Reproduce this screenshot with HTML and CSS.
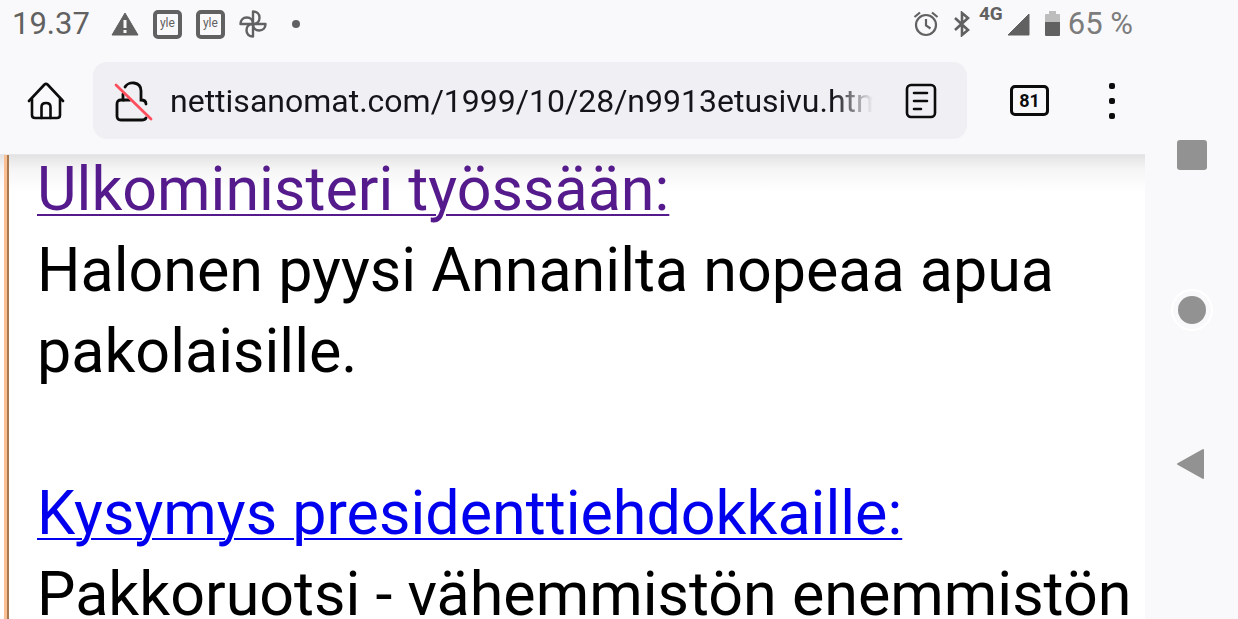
FILE: index.html
```
<!DOCTYPE html>
<html lang="fi">

<head>
    <meta charset="utf-8">
    <meta name="viewport" content="width=device-width, initial-scale=1">
    <title>Nettisanomat</title>
    <link rel="stylesheet" href="styles.css">
</head>

<body>
    <div class="screen">
        <header class="status-bar">
            <span class="clock">19.37</span>
            <div class="notifications">
                <svg width="28" height="24" viewBox="0 0 28 24">
                    <path d="M14 1 L27 23 H1 Z" fill="#616161" stroke="#616161" stroke-linejoin="round" />
                    <path d="M14 8v8M14 18v3" stroke="#f9f9fb" stroke-width="3" />
                </svg>
                <span class="yle">yle</span>
                <span class="yle">yle</span>
                <svg width="28" height="28" viewBox="0 0 28 28" fill="none" stroke="#616161" stroke-width="2.4" stroke-linejoin="round">
                    <path d="M14 14V1.500C18 1.500 20.500 4 20.500 7.800S18 14 14 14" />
                    <path d="M14 14H26.500C26.500 18 24 20.500 20.200 20.500S14 18 14 14" />
                    <path d="M14 14V26.500C10 26.500 7.500 24 7.500 20.200S10 14 14 14" />
                    <path d="M14 14H1.500C1.500 10 4 7.500 7.800 7.500S14 10 14 14" />
                </svg>
                <span class="dot"></span>
            </div>
            <div class="system">
                <svg class="alarm" width="26" height="26" viewBox="0 0 26 26" fill="none" stroke="#616161" stroke-width="2.200">
                    <circle cx="13" cy="14" r="10" />
                    <path d="M13 8v6.500l4.500 3M1.500 6L7 1.500M24.500 6L19 1.500" />
                </svg>
                <svg class="bluetooth" width="18" height="26" viewBox="0 0 18 26" fill="none" stroke="#616161" stroke-width="2.600">
                    <path d="M2 7l13 12-6 5V2l6 5L2 19" />
                </svg>
                <span class="network">4G</span>
                <svg class="signal" width="23" height="23" viewBox="0 0 23 23">
                    <path d="M22 1V22H1Z" fill="#616161" stroke="#616161" stroke-linejoin="round" />
                </svg>
                <svg class="battery" width="15" height="26" viewBox="0 0 15 26">
                    <path d="M4 0h7v3h3q1 0 1 1v7H0V4q0-1 1-1h3z" fill="#bdbdbd" />
                    <path d="M0 11h15v13q0 1-1 1H1q-1 0-1-1z" fill="#616161" />
                </svg>
                <span class="percent">65 %</span>
            </div>
        </header>

        <div class="toolbar">
            <button class="home" title="Koti">
                <svg width="38" height="38" viewBox="0 0 38 38" fill="none" stroke="#0c0c0d" stroke-width="2.600" stroke-linecap="round" stroke-linejoin="round">
                    <path d="M2 19L17.500 2.500Q19 1.200 20.500 2.500L36 19" />
                    <path d="M5 17V33Q5 36 8 36H30Q33 36 33 33V17" />
                    <path d="M14.500 36V25Q14.500 21 19 21T23.500 25V36" />
                </svg>
            </button>
            <div class="address">
                <button title="Yhteys ei ole suojattu">
                    <svg width="40" height="42" viewBox="0 0 40 42" fill="none" stroke="#0c0c0d" stroke-width="2.800" stroke-linecap="round">
                        <path d="M11 7C14 1 27 1 27 11V20Q32 20 32 24" />
                        <path d="M9 14V20H7Q3 20 3 24V36Q3 40 7 40H28Q31 40 32 38" />
                        <path d="M9 20H16" />
                        <path d="M2 5L37 39" stroke="#ff4f5e" />
                    </svg>
                </button>
                <input class="url" type="text" aria-label="Osoite" value="nettisanomat.com/1999/10/28/n9913etusivu.htm">
                <button title="Lukunäkymä">
                    <svg width="32" height="36" viewBox="0 0 32 36" fill="none" stroke="#0c0c0d" stroke-width="2.600" stroke-linecap="round">
                        <rect x="2" y="2" width="28" height="32" rx="4" />
                        <path d="M9 10H22M9 18H22M9 26H16" />
                    </svg>
                </button>
            </div>
            <button class="tabs" title="Välilehdet">81</button>
            <button class="menu" title="Valikko">
                <svg width="6" height="36" viewBox="0 0 6 36" fill="#0c0c0d">
                    <rect width="6" height="6" rx="2" />
                    <rect y="15" width="6" height="6" rx="2" />
                    <rect y="30" width="6" height="6" rx="2" />
                </svg>
            </button>
        </div>

        <main class="page">
            <div class="news">
                <p>
                    <a class="visited" href="#ulkoministeri">Ulkoministeri työssään:</a><br>
                    Halonen pyysi Annanilta nopeaa apua pakolaisille.
                </p>
                <p>
                    <a href="#kysymys">Kysymys presidenttiehdokkaille:</a><br>
                    Pakkoruotsi - vähemmistön enemmistön
                </p>
            </div>
        </main>
    </div>

    <nav class="nav-keys">
        <button title="Viimeisimmät">
            <svg width="42" height="42" viewBox="0 0 42 42">
                <rect x="6" y="6" width="30" height="30" rx="3" fill="#929292" />
            </svg>
        </button>
        <button title="Aloitusnäyttö">
            <svg width="42" height="42" viewBox="0 0 42 42">
                <circle cx="21" cy="21" r="20" fill="#f9f9fb" stroke="#fff" stroke-width="2" />
                <circle cx="21" cy="21" r="14" fill="#929292" />
            </svg>
        </button>
        <button title="Takaisin">
            <svg width="42" height="42" viewBox="0 0 42 42">
                <path d="M7 21L32 7V35Z" fill="#929292" stroke="#929292" stroke-width="2" stroke-linejoin="round" />
            </svg>
        </button>
    </nav>
</body>

</html>
```

FILE: styles.css
```
* {
    box-sizing: border-box;
}

body {
    margin: 0;
    display: flex;
    height: 100vh;
    overflow: hidden;
    background: #f9f9fb;
    font-family: Roboto, "Liberation Sans", sans-serif;
}

button {
    display: flex;
    align-items: center;
    justify-content: center;
    padding: 0;
    border: none;
    background: none;
    color: #0c0c0d;
    font-family: inherit;
}

svg {
    display: block;
    flex-shrink: 0;
}

.screen {
    flex: 1;
    min-width: 0;
    display: flex;
    flex-direction: column;
}

/* status bar */
.status-bar {
    display: flex;
    align-items: center;
    height: 48px;
    padding: 0 12px;
    color: #616161;
}

.clock,
.percent {
    font-size: 31px;
    line-height: 50px;
}

.notifications {
    display: flex;
    align-items: center;
    gap: 14px;
    margin-left: 21px;
}

.yle {
    width: 29px;
    height: 29px;
    border: 4px solid #616161;
    border-radius: 5px;
    font-size: 12px;
    line-height: 19px;
    text-align: center;
}

.dot {
    width: 8px;
    height: 8px;
    margin-left: 11px;
    border-radius: 50%;
    background: #616161;
}

.system {
    display: flex;
    align-items: center;
    margin-left: auto;
}

.bluetooth {
    margin: 0 8px 0 14px;
}

.network {
    align-self: flex-start;
    margin-right: 4px;
    font-size: 19px;
    font-weight: 700;
    line-height: 30px;
}

.battery {
    margin: 0 8px 0 15px;
}

.percent {
    color: #7c7c7c;
}

/* browser toolbar */
.toolbar {
    display: flex;
    align-items: center;
    height: 107px;
    padding: 0 30px 1px 27px;
    border-bottom: 1px solid #e7e7e9;
}

.address {
    flex: 1;
    min-width: 0;
    display: flex;
    align-items: center;
    height: 77px;
    margin: 0 43px 0 28px;
    padding: 0 30px 0 21px;
    border-radius: 14px;
    background: #f0f0f4;
}

.url {
    flex: 1;
    min-width: 0;
    margin: 0 32px 0 16px;
    padding: 0;
    border: none;
    outline: none;
    background: none;
    color: #15141a;
    font-family: inherit;
    font-size: 32px;
    line-height: 40px;
    -webkit-mask-image: linear-gradient(to left, transparent, #000 40px);
    mask-image: linear-gradient(to left, transparent, #000 40px);
}

.tabs {
    width: 39px;
    height: 31px;
    margin-right: 60px;
    border: 3px solid #0c0c0d;
    border-radius: 5px;
    font-size: 18px;
    font-weight: 700;
}

/* web page */
.page {
    flex: 1;
    min-height: 0;
    display: flex;
    padding-left: 4px;
    overflow: hidden;
    background: linear-gradient(#e3e3e3, #f5f5f5 14px, #fff 36px);
}

/* scrolled a little under the toolbar */
.news {
    flex: 1;
    margin-top: -6px;
    border-left: 3px solid #fabf93;
    box-shadow: inset 2px 0 #a87850;
    padding-left: 30px;
}

.news p {
    margin: 0 0 81px;
    font-size: 61px;
    line-height: 81px;
}

.news p:last-child {
    margin: 0;
}

.news a {
    color: #0000ee;
    text-decoration-thickness: 2px;
    text-underline-offset: 4px;
}

.news .visited {
    color: #551a8b;
}

/* android keys */
.nav-keys {
    display: flex;
    flex-direction: column;
    align-items: center;
    justify-content: space-around;
    width: 93px;
    padding: 12.5vh 0;
}
```
